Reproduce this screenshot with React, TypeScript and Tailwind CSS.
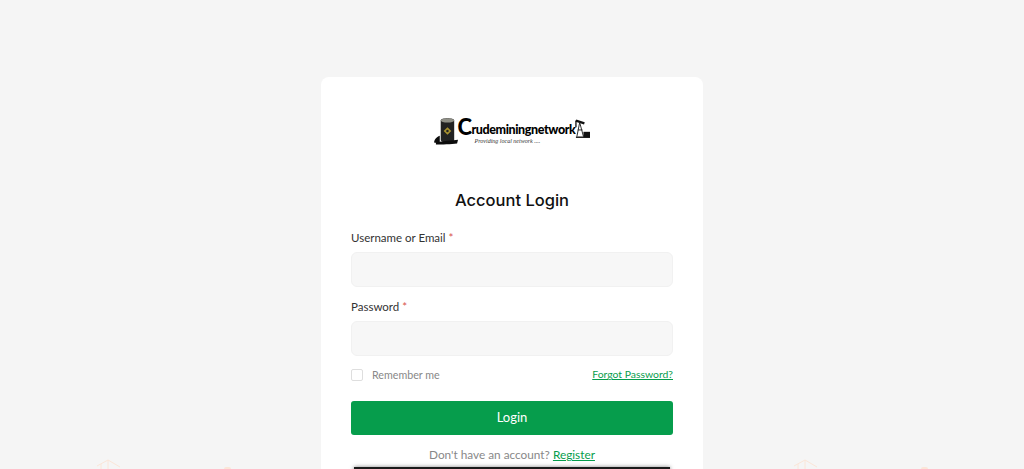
function Logo() {
  return (
    <div className="flex items-start justify-center h-[30px]">
      <svg width="25" height="28" viewBox="0 0 26 28" className="mr-[-1px]">
        <path d="M0 26 C1 21 4 20 6 19 L6 27 Z" fill="#0c0c0c" />
        <path d="M7 3 C7 0 21 0 21 3 L21 23 C21 27 7 27 7 23 Z" fill="#222" />
        <ellipse cx="14" cy="3" rx="7" ry="2.2" fill="#8f8f86" />
        <path d="M2 26 C8 24 20 24 25 23 L24 27 C18 28 8 28 2 28 Z" fill="#0c0c0c" />
        <path d="M14 10 L18 14 L14 18 L10 14 Z" fill="#a8922f" />
        <circle cx="14" cy="14" r="1.3" fill="#222" />
      </svg>
      <div className="flex flex-col">
        <div className="flex items-end h-[21px] font-['Lato',sans-serif] font-black text-black leading-none">
          <span className="text-[22px] tracking-[-0.5px]">C</span>
          <span className="text-[12.5px] tracking-[-0.4px] mb-[2px]">rudeminingnetwork</span>
        </div>
        <span className="ml-[17px] mt-[-1px] font-['Liberation_Serif',serif] italic text-[6px] leading-[8px] text-[#333]">
          Providing local network ....
        </span>
      </div>
      <svg width="15" height="22" viewBox="0 0 16 22" className="mt-[1px]">
        <path d="M1 2 L10 5" stroke="#111" strokeWidth="2.4" fill="none" />
        <path d="M5 4 L2 19 M5 4 L9 19 M3 12 L8 12" stroke="#222" strokeWidth="1" fill="none" />
        <path d="M1 2 L1 9" stroke="#111" strokeWidth="1.4" fill="none" />
        <rect x="9" y="14" width="7" height="6" fill="#111" />
        <rect x="1" y="19" width="15" height="1.5" fill="#111" />
      </svg>
    </div>
  );
}

function Field({ label }: { label: string }) {
  return (
    <div>
      <label className="block font-['Lato',sans-serif] text-[11.5px] leading-[18px] text-[#333]">
        {label} <span className="text-[#d9534f]">*</span>
      </label>
      <input
        type="text"
        className="block w-full h-[35px] mt-[5px] rounded-[6px] border border-[#f1f1f1] bg-[#f7f7f7] outline-none"
      />
    </div>
  );
}

function Shape() {
  return (
    <svg width="36" height="12" viewBox="0 0 36 12" fill="none" stroke="#fbe6d8" strokeWidth="1">
      <path d="M1 9 L12 3 L24 10 M12 3 L12 12 M5 7 L5 12" />
    </svg>
  );
}

export default function App() {
  return (
    <div className="relative h-screen overflow-hidden bg-[#f5f5f5] font-['Inter',sans-serif]">
      <div className="absolute left-[96px] bottom-0"><Shape /></div>
      <div className="absolute left-[224px] bottom-0 w-[7px] h-[2px] rounded-t-full bg-[#fbe6d8]"></div>
      <div className="absolute left-[793px] bottom-0"><Shape /></div>
      <div className="absolute left-[921px] bottom-0 w-[7px] h-[2px] rounded-t-full bg-[#fbe6d8]"></div>

      <div className="relative mx-auto mt-[77px] w-[382px] rounded-t-[8px] bg-white px-[30px] pt-[40px] pb-[30px]">
        <Logo />
        <h1 className="mt-[40px] text-center text-[16.5px] leading-[26px] font-medium text-[#111]">Account Login</h1>

        <div className="mt-[16px] flex flex-col gap-[11px]">
          <Field label="Username or Email" />
          <Field label="Password" />
        </div>

        <div className="mt-[11px] flex h-[16px] items-center justify-between font-['Lato',sans-serif]">
          <label className="flex items-center text-[10.7px] text-[#888]">
            <span className="mr-[9px] h-[12px] w-[12px] rounded-[2px] border border-[#dedede] bg-white"></span>
            Remember me
          </label>
          <a href="#" className="text-[10.4px] text-[#069d4c] underline">Forgot Password?</a>
        </div>

        <button className="mt-[18px] block h-[34px] w-full rounded-[3px] bg-[#069d4c] font-['Lato',sans-serif] text-[13px] text-white">Login</button>

        <p className="mt-[11px] text-center font-['Lato',sans-serif] text-[11.8px] leading-[18px] text-[#888]">
          Don't have an account? <a href="#" className="text-[#069d4c] underline">Register</a>
        </p>

        <div className="mx-auto mt-[3px] h-[70px] w-[316px] bg-[#1a1a1a] shadow-[0_0_4px_rgba(0,0,0,0.5)]"></div>
      </div>
    </div>
  );
}
